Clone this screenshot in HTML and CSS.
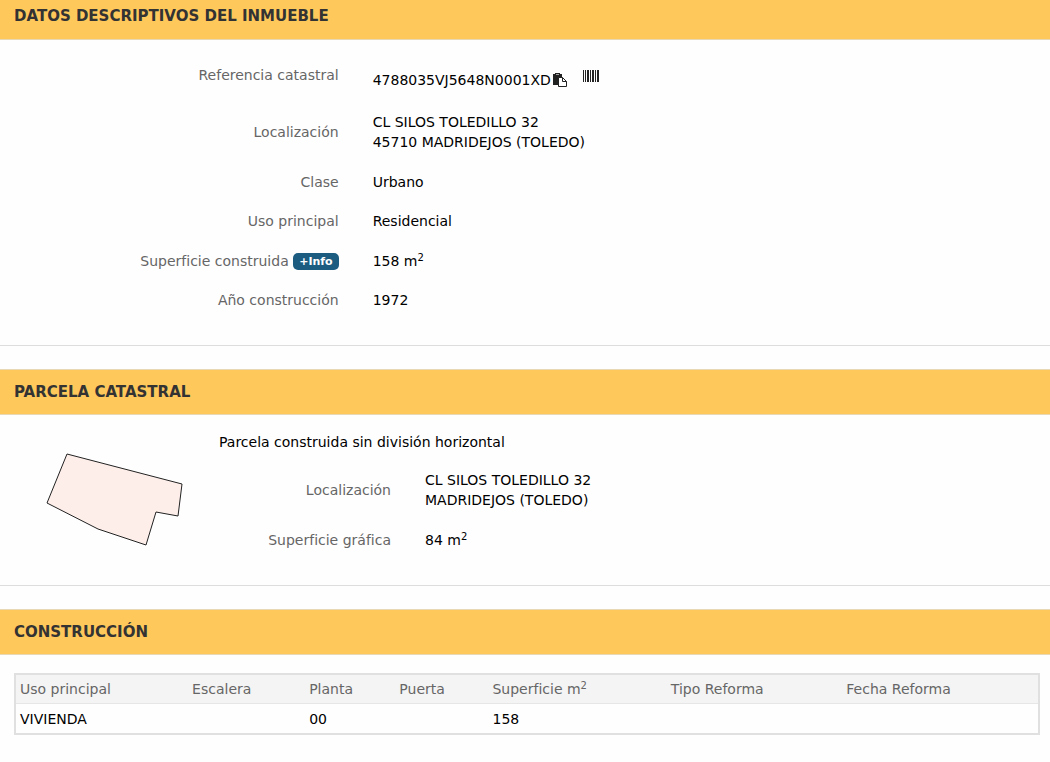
FILE: index.html
```
<!DOCTYPE html>
<html lang="es">

<head>
    <meta charset="UTF-8" />
    <meta name="viewport" content="width=device-width, initial-scale=1.0" />
    <title>Datos del inmueble</title>
    <link rel="stylesheet" href="styles.css">
</head>

<body>
    <section class="panel">
        <h2 class="panel-title first">DATOS DESCRIPTIVOS DEL INMUEBLE</h2>
        <dl class="datos">
            <div class="row referencia">
                <dt>Referencia catastral</dt>
                <dd>
                    <span class="codigo">4788035VJ5648N0001XD</span>
                    <button class="icon copy" type="button" aria-label="Copiar referencia">
                        <svg width="14" height="14" viewBox="0 0 14 14">
                            <path fill="#222" d="M0 1h2V0h5v1h2v3H6v8H0z" />
                            <path fill="#aaa" d="M3 1h3v1H3z" />
                            <path fill="#fff" stroke="#222" d="M5.500 4.500h4l4 4v5h-8z" />
                            <path fill="none" stroke="#222" d="M9.500 4.500v4h4" />
                        </svg>
                    </button>
                    <button class="icon barcode" type="button" aria-label="Código de barras">
                        <svg width="16" height="12" viewBox="0 0 16 12">
                            <path fill="#222" d="M0 0h1v12H0zM2 0h1v12H2zM4 0h2v12H4zM7 0h1v12H7zM9 0h2v12H9zM12 0h1v12h-1zM14 0h2v12h-2z" />
                        </svg>
                    </button>
                </dd>
            </div>
            <div class="row direccion">
                <dt>Localización</dt>
                <dd>CL SILOS TOLEDILLO 32<br>45710 MADRIDEJOS (TOLEDO)</dd>
            </div>
            <div class="row">
                <dt>Clase</dt>
                <dd>Urbano</dd>
            </div>
            <div class="row">
                <dt>Uso principal</dt>
                <dd>Residencial</dd>
            </div>
            <div class="row superficie">
                <dt>Superficie construida <a class="info" href="#construccion">+Info</a></dt>
                <dd>158 m<sup>2</sup></dd>
            </div>
            <div class="row">
                <dt>Año construcción</dt>
                <dd>1972</dd>
            </div>
        </dl>
    </section>

    <section class="panel">
        <h2 class="panel-title">PARCELA CATASTRAL</h2>
        <div class="parcela">
            <svg class="plano" width="170" height="120" viewBox="0 0 170 120" role="img" aria-label="Plano de la parcela">
                <path fill="#fdeeea" stroke="#222" d="M37 14L152 44L148 76L126 72L116 105L68 89L17 63Z" />
            </svg>
            <div class="detalle">
                <p>Parcela construida sin división horizontal</p>
                <dl>
                    <div class="row direccion">
                        <dt>Localización</dt>
                        <dd>CL SILOS TOLEDILLO 32<br>MADRIDEJOS (TOLEDO)</dd>
                    </div>
                    <div class="row">
                        <dt>Superficie gráfica</dt>
                        <dd>84 m<sup>2</sup></dd>
                    </div>
                </dl>
            </div>
        </div>
    </section>

    <section class="panel" id="construccion">
        <h2 class="panel-title">CONSTRUCCIÓN</h2>
        <div class="tabla">
            <table>
                <thead>
                    <tr>
                        <th>Uso principal</th>
                        <th>Escalera</th>
                        <th>Planta</th>
                        <th>Puerta</th>
                        <th>Superficie m<sup>2</sup></th>
                        <th>Tipo Reforma</th>
                        <th>Fecha Reforma</th>
                    </tr>
                </thead>
                <tbody>
                    <tr>
                        <td>VIVIENDA</td>
                        <td></td>
                        <td>00</td>
                        <td></td>
                        <td>158</td>
                        <td></td>
                        <td></td>
                    </tr>
                </tbody>
            </table>
        </div>
    </section>
</body>

</html>
```

FILE: styles.css
```
* {
    padding: 0;
    margin: 0;
    box-sizing: border-box;
}

body {
    background-color: #fefefe;
    color: #000;
    font-family: Verdana, "DejaVu Sans", sans-serif;
    font-size: 14px;
    line-height: 20px;
}

.panel {
    border-bottom: 1px solid #ddd;
    margin-bottom: 23px;
}

.panel:last-child {
    border-bottom: 0;
    margin-bottom: 0;
}

.panel-title {
    background-color: #ffc85b;
    border: solid #e8d9b4;
    border-width: 1px 0;
    color: #333;
    font-size: 15px;
    line-height: 20px;
    padding: 12px 14px;
}

.panel-title.first {
    border-top: 0;
    padding: 6px 14px 13px;
}

.datos {
    padding: 15px 0 26px;
}

.row {
    display: grid;
    grid-template-columns: 1fr 2fr;
    column-gap: 34px;
    align-items: center;
    padding: 10px 0 9px;
}

.row dt {
    color: #666;
    text-align: right;
}

.direccion {
    padding-bottom: 10px;
}

.superficie {
    min-height: 40px;
}

.referencia {
    align-items: start;
}

.referencia dd {
    display: flex;
    height: 28px;
}

.codigo {
    margin-top: 5px;
}

sup {
    font-size: 10px;
    line-height: 0;
    position: relative;
    top: -5px;
    vertical-align: baseline;
}

.icon {
    background: none;
    border: 0;
    cursor: pointer;
    display: block;
}

.icon svg {
    display: block;
}

.copy {
    align-self: flex-start;
    margin: 8px 16px 0 2px;
}

.barcode {
    align-self: flex-start;
    margin-top: 5px;
}

.info {
    background-color: #1b5c80;
    border-radius: 5px;
    color: #fff;
    display: inline-block;
    font-size: 11px;
    font-weight: bold;
    line-height: 17px;
    padding: 0 6px;
    text-decoration: none;
    vertical-align: middle;
}

.parcela {
    display: flex;
    padding: 17px 0 25px;
}

.plano {
    flex: none;
    margin: 8px 19px 0 30px;
}

.detalle {
    flex: 1;
    max-width: 550px;
}

.detalle p {
    margin-bottom: 8px;
}

.tabla {
    padding: 18px 10px 24px 14px;
}

table {
    border: 2px solid #e0e0e0;
    border-collapse: separate;
    border-spacing: 0;
    width: 100%;
}

th,
td {
    height: 29px;
    padding: 0 4px;
    text-align: left;
}

th {
    background-color: #f4f4f4;
    border-bottom: 1px solid #e6e6e6;
    color: #666;
    font-weight: normal;
}
```
